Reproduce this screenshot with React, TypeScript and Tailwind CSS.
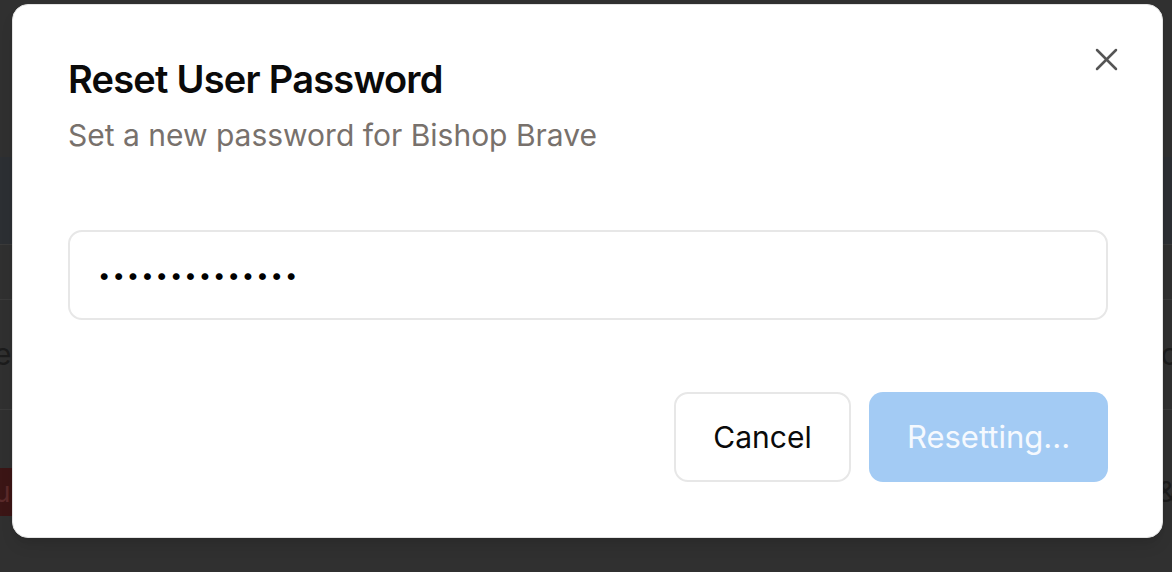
import { useState } from 'react';

const font = { fontFamily: 'Inter, "Noto Sans", sans-serif' };

// dimmed page behind the modal, only a sliver shows at the edges
const BackgroundPage = () => (
  <div className="flex h-[572px] w-full flex-col bg-[#303030]">
    <div className="h-[157px] shrink-0" />
    <div className="h-[88px] shrink-0 border-b border-[#3a3a3a] bg-[#2c2f33]" />
    <div className="h-[55px] shrink-0 border-b border-[#3a3a3a]" />
    <div className="flex h-[110px] shrink-0 items-center justify-between border-b border-[#3a3a3a] text-[30px] text-[#1c1c1c]">
      <span className="-ml-[6px]">e</span>
      <span className="-mr-[6px]">c</span>
    </div>
    <div className="h-[58px] shrink-0" />
    <div className="flex h-[48px] shrink-0 items-center justify-between text-[28px]">
      <span className="-ml-[6px] flex h-full w-[40px] items-center bg-[#3b1515] text-[#5a2a2a]">up</span>
      <span className="-mr-[4px] text-[#1c1c1c]">&amp;</span>
    </div>
  </div>
);

export default function App() {
  const [pw] = useState('••••••••••••••');

  return (
    <div className="relative h-[572px] w-[1172px] overflow-hidden bg-[#303030]" style={font}>
      <BackgroundPage />

      {/* modal */}
      <div className="absolute left-[12px] top-[4px] flex w-[1151px] flex-col rounded-[16px] border border-[#e4e4e4] bg-white pb-[55px] pl-[55px] pr-[54px] pt-[53px] shadow-lg">
        <button className="absolute right-[44px] top-[42px] flex h-[24px] w-[24px] items-center justify-center text-[#555]">
          <svg width="23" height="23" viewBox="0 0 23 23" fill="none" stroke="currentColor" strokeWidth="2.5" strokeLinecap="round">
            <path d="M2 2 21 21" />
            <path d="M21 2 2 21" />
          </svg>
        </button>

        <h2 className="text-[38px] font-semibold leading-[42px] tracking-[-0.02em] text-[#0a0a0a]">Reset User Password</h2>
        <p className="mt-[17px] text-[30px] leading-[36px] text-[#78716c]">Set a new password for Bishop Brave</p>

        <div className="mt-[77px] flex h-[90px] items-center rounded-[14px] border-2 border-[#e7e7e7] px-[28px]">
          <span className="text-[22px] tracking-[2px] text-black">{pw}</span>
        </div>

        <div className="mt-[72px] flex justify-end gap-[18px]">
          <button className="flex h-[90px] w-[177px] items-center justify-center rounded-[14px] border-2 border-[#e7e7e7] bg-white text-[30px] text-[#0a0a0a]">
            Cancel
          </button>
          <button className="flex h-[90px] w-[239px] items-center justify-center rounded-[14px] bg-[#a3cbf4] text-[31px] text-[#f5f9fe]">
            Resetting...
          </button>
        </div>
      </div>
    </div>
  );
}
